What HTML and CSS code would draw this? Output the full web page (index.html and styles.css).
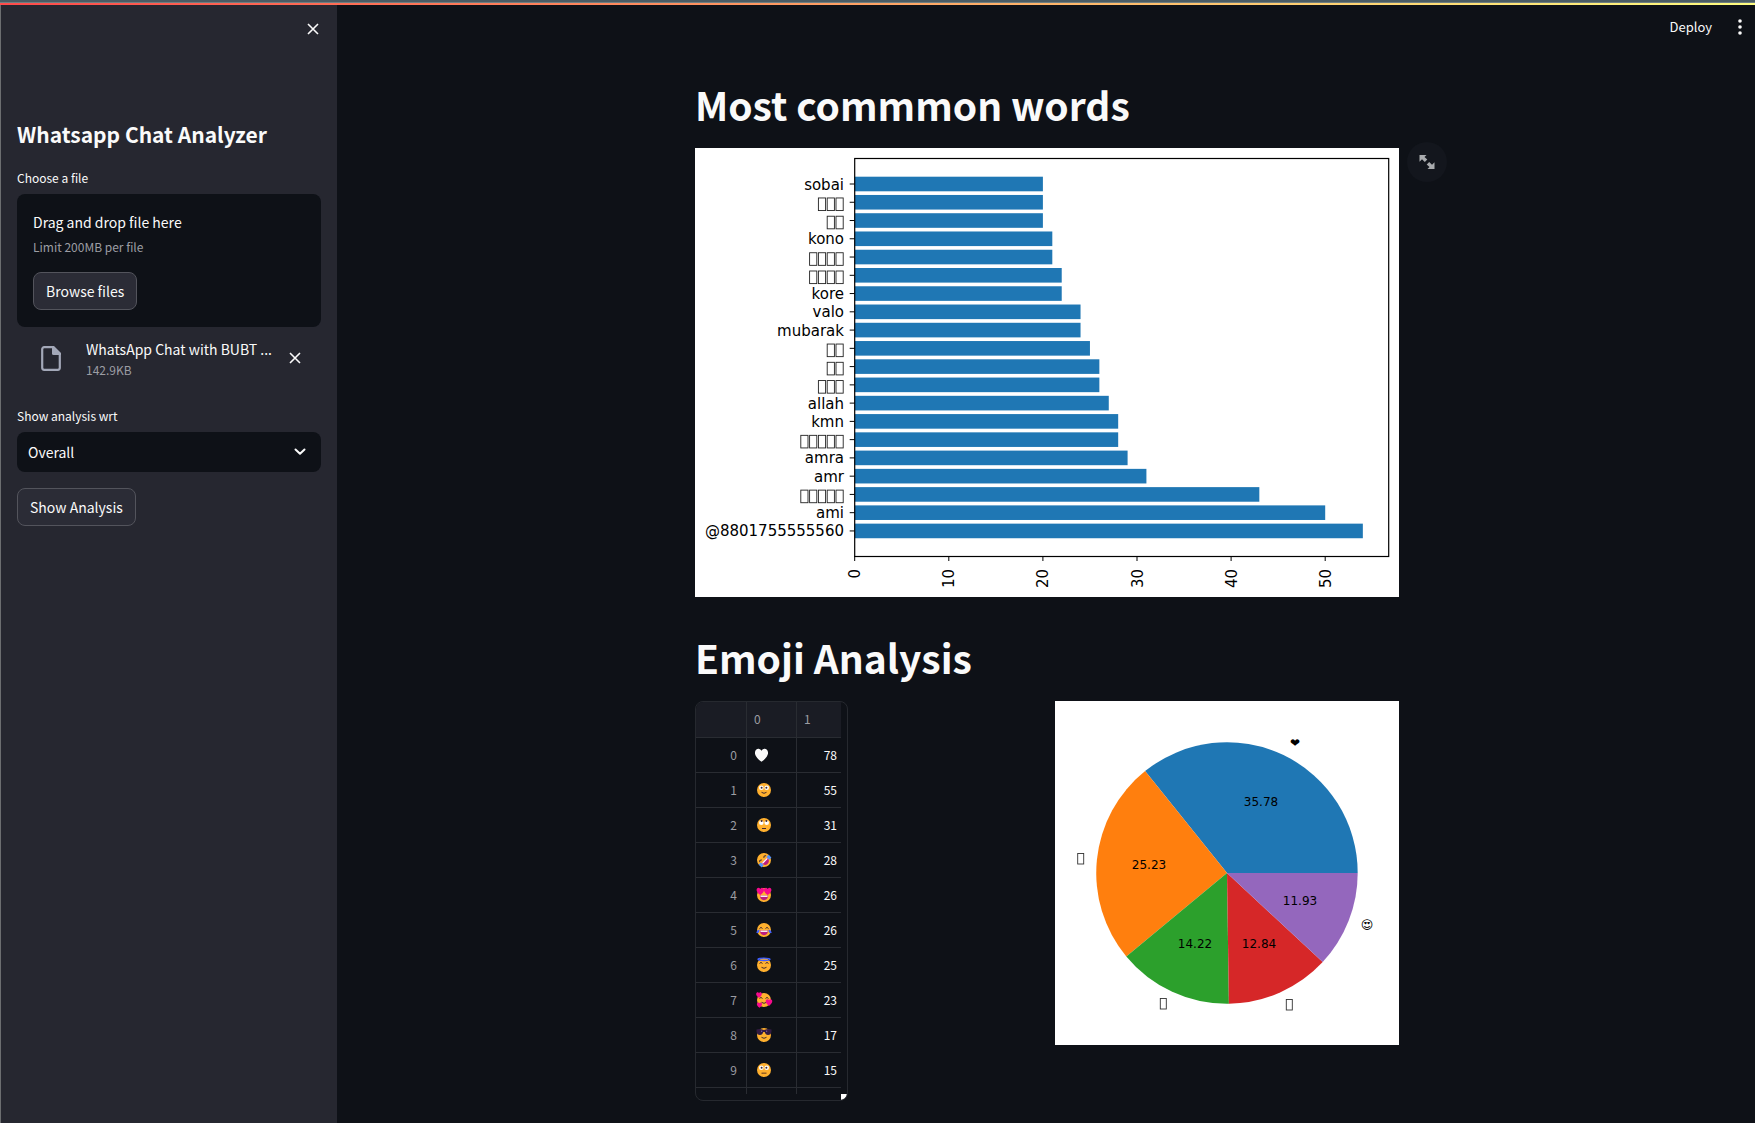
FILE: index.html
```html
<!DOCTYPE html>
<html lang="en">
<head>
<meta charset="utf-8">
<title>Whatsapp Chat Analyzer</title>
<meta name="viewport" content="width=device-width, initial-scale=1">
<link rel="stylesheet" href="styles.css">
</head>
<body>
<div class="window-edge"></div>
<div class="decoration"></div>
<div class="app">
  <aside class="sidebar">
    <div class="sidebar-top">
      <button class="icon-button" type="button" aria-label="Close sidebar">
        <svg width="12" height="12" viewBox="0 0 12 12"><path d="M1 1l10 10M11 1L1 11" stroke="#fafafa" stroke-width="1.6" fill="none"/></svg>
      </button>
    </div>
    <h2 class="sidebar-title">Whatsapp Chat Analyzer</h2>
    <label class="field-label" for="chat-file">Choose a file</label>
    <div class="dropzone">
      <input class="file-input" id="chat-file" type="file" tabindex="-1">
      <span class="drop-text">Drag and drop file here</span>
      <span class="small-text">Limit 200MB per file</span>
      <button class="button browse" type="button">Browse files</button>
    </div>
    <div class="file-row">
      <svg class="file-icon" width="20" height="25" viewBox="0 0 20 25"><path d="M11 1.2H3.2a2 2 0 0 0-2 2v18.6a2 2 0 0 0 2 2h13.6a2 2 0 0 0 2-2V9" fill="none" stroke="#a3a8b8" stroke-width="2.2"/><path d="M11 0h2l7 7v2h-7.5a1.500 1.500 0 0 1-1.500-1.500z" fill="#a3a8b8"/></svg>
      <div class="file-info">
        <span class="file-name">WhatsApp Chat with BUBT ...</span>
        <span class="small-text">142.9KB</span>
      </div>
      <button class="icon-button" type="button" aria-label="Remove file">
        <svg width="12" height="12" viewBox="0 0 12 12"><path d="M1 1l10 10M11 1L1 11" stroke="#fafafa" stroke-width="1.6" fill="none"/></svg>
      </button>
    </div>
    <label class="field-label" for="scope">Show analysis wrt</label>
    <div class="select-box">
      <select id="scope"><option>Overall</option></select>
      <svg class="chevron" width="12" height="8" viewBox="0 0 12 8"><path d="M1.500 1.500L6 5.800l4.500-4.300" fill="none" stroke="#fafafa" stroke-width="2" stroke-linecap="round" stroke-linejoin="round"/></svg>
    </div>
    <button class="button analyze" type="button">Show Analysis</button>
  </aside>

  <main class="main">
    <header class="toolbar">
      <button class="deploy" type="button">Deploy</button>
      <button class="icon-button menu" type="button" aria-label="Menu">
        <svg width="4" height="16" viewBox="0 0 4 16" fill="#fafafa"><circle cx="2" cy="2" r="1.800"/><circle cx="2" cy="8" r="1.800"/><circle cx="2" cy="14" r="1.800"/></svg>
      </button>
    </header>
    <div class="content">
      <h1 class="heading">Most commmon words</h1>
      <figure class="figure">
        <svg class="plot" id="words" viewBox="0 0 704 449" role="img" aria-label="Most common words"></svg>
        <button class="expand" type="button" aria-label="View fullscreen">
          <svg width="16" height="16" viewBox="0 0 16 16" fill="#a9abae"><path d="M.5 1h7L5.500 3l2.800 2.500L5.800 8 3 5.200.5 7.800zM15.500 15h-7l2-2-2.800-2.500L10.200 8l2.800 2.800 2.500-2.600z"/></svg>
        </button>
      </figure>
      <h1 class="heading second">Emoji Analysis</h1>
      <div class="columns">
        <div class="table-frame">
          <table class="table">
            <thead><tr><th class="index"></th><th class="emoji">0</th><th class="count">1</th></tr></thead>
            <tbody id="rows"></tbody>
          </table>
          <span class="resize"></span>
        </div>
        <svg class="pie" viewBox="0 0 344 344" role="img" aria-label="Emoji share">
          <rect width="344" height="344" fill="#fff"/>
          <path fill="#1f77b4" d="M172 172L302.700 172A130.700 130.700 0 0 0 90.100 70.100z"/>
          <path fill="#ff7f0e" d="M172 172L90.100 70.100A130.700 130.700 0 0 0 71.300 255.400z"/>
          <path fill="#2ca02c" d="M172 172L71.300 255.400A130.700 130.700 0 0 0 173.900 302.700z"/>
          <path fill="#d62728" d="M172 172L173.900 302.700A130.700 130.700 0 0 0 267.700 261.100z"/>
          <path fill="#9467bd" d="M172 172L267.700 261.100A130.700 130.700 0 0 0 302.700 172z"/>
          <g class="pie-text">
            <text x="206" y="105">35.78</text><text x="94" y="168">25.23</text><text x="140" y="247">14.22</text><text x="204" y="247">12.84</text><text x="245" y="204">11.93</text>
            <text x="240" y="46">&#x2764;&#xFE0E;</text><text x="312" y="228">&#x1F60D;&#xFE0E;</text>
          </g>
          <g fill="none" stroke="#333" stroke-width=".9"><rect x="22.700" y="152.500" width="6" height="10.500"/><rect x="105.300" y="297.500" width="6" height="10.500"/><rect x="231.300" y="298.500" width="6" height="10.500"/></g>
        </svg>
      </div>
    </div>
  </main>
</div>
<script src="app.js"></script>
</body>
</html>
```
FILE: styles.css
```css
* { box-sizing: border-box; }

body {
  margin: 0;
  min-height: 100vh;
  display: flex;
  flex-direction: column;
  background: #0e1117;
  color: #fafafa;
  font-family: "Noto Sans CJK SC", "Noto Sans", sans-serif;
  font-size: 14px;
  line-height: 22px;
}

button, select { font: inherit; color: inherit; }

button {
  padding: 0;
  border: 0;
  background: none;
}

.window-edge {
  height: 3px;
  background: #4b5c64;
  border-bottom: 1px solid #6f7f82;
}

.decoration {
  height: 2px;
  background: linear-gradient(90deg, #ff4b4b, #fffd80);
}

.app {
  flex: 1;
  display: flex;
  border-left: 1px solid #6c6e70;
}

.sidebar {
  flex: none;
  width: 336px;
  padding: 0 16px;
  background: #262730;
  display: flex;
  flex-direction: column;
}

.sidebar-top {
  display: flex;
  justify-content: flex-end;
  padding: 16px 0 0;
  height: 111px;
}

.icon-button {
  width: 16px;
  height: 16px;
  display: grid;
  place-items: center;
}

.sidebar-title {
  margin: 0 0 17px;
  font-size: 21px;
  line-height: 36px;
  font-weight: 700;
}

.field-label {
  font-size: 12px;
  line-height: 17px;
}

.dropzone {
  position: relative;
  height: 133px;
  margin-top: 8px;
  padding: 16px;
  display: flex;
  flex-direction: column;
  background: #0e1117;
  border-radius: 8px;
}

.file-input {
  position: absolute;
  inset: 0;
  width: 100%;
  opacity: 0;
}

.small-text {
  font-size: 12px;
  line-height: 20px;
  color: #9c9da3;
}

.drop-text {
  margin-bottom: 3px;
  line-height: 24px;
}

.button {
  position: relative;
  height: 38px;
  padding: 0 12px;
  background: #2b2c36;
  border: 1px solid #53545c;
  border-radius: 8px;
  align-self: flex-start;
}

.browse { margin-top: 15px; }

.file-row {
  display: flex;
  align-items: center;
  height: 62px;
  padding: 0 18px 0 24px;
  margin-bottom: 18px;
}

.file-icon { flex: none; }

.file-info {
  flex: 1;
  min-width: 0;
  display: flex;
  flex-direction: column;
  margin: 2px 7px 0 25px;
}

.file-name { white-space: nowrap; }

.select-box {
  position: relative;
  margin: 8px 0 16px;
}

.select-box select {
  display: block;
  width: 100%;
  height: 40px;
  padding: 0 11px;
  appearance: none;
  background: #0e1117;
  border: 0;
  border-radius: 8px;
}

.chevron {
  position: absolute;
  right: 15px;
  top: 16px;
  pointer-events: none;
}

.main {
  flex: 1;
  min-width: 0;
}

.toolbar {
  display: flex;
  justify-content: flex-end;
  align-items: center;
  gap: 20px;
  height: 44px;
  padding-right: 7px;
}

.deploy { font-size: 13px; }

.content {
  width: 706px;
  max-width: 100%;
  margin: 0 auto;
  padding: 28px 0 22px 2px;
}

.heading {
  margin: 0;
  padding-bottom: 17px;
  font-size: 39px;
  line-height: 54px;
  font-weight: 700;
}

.heading.second { padding-top: 33px; }

.figure {
  position: relative;
  margin: 0;
}

.plot {
  display: block;
  width: 100%;
  background: #fff;
}

.plot text {
  font-family: "DejaVu Sans", sans-serif;
  font-size: 15px;
  text-anchor: end;
  fill: #000;
}

.expand {
  position: absolute;
  top: -6px;
  right: -48px;
  width: 40px;
  height: 40px;
  border-radius: 50%;
  background: #13161d;
  display: grid;
  place-items: center;
}

.columns {
  display: flex;
  justify-content: space-between;
  align-items: flex-start;
}

.table-frame {
  position: relative;
  width: 153px;
  height: 400px;
  padding: 0 6px 6px 0;
  border: 1px solid #26292f;
  border-radius: 8px;
  overflow: hidden;
}

.table {
  display: block;
  height: 392px;
  overflow: hidden;
  border-spacing: 0;
  font-size: 12px;
  line-height: 34px;
}

.table thead, .table tbody { display: block; }

.table tr {
  display: grid;
  grid-template-columns: 51px 50px 1fr;
  height: 35px;
}

.table th {
  height: 36px;
  font-weight: 400;
  text-align: left;
  background: #1a1c24;
  color: #9c9da3;
}

.table thead tr { height: 36px; }

.table th, .table td {
  padding: 0 7px;
  border-right: 1px solid #292c32;
  border-bottom: 1px solid #292c32;
}

.table td { height: 35px; }

.table .index { padding-right: 9px; text-align: right; color: #9c9da3; }

.table .count { border-right: 0; }

.table td.count { padding-right: 4px; text-align: right; }

.table td svg { display: block; margin: 9px 2px; overflow: visible; }

.resize {
  position: absolute;
  right: 0;
  bottom: 0;
  width: 6px;
  height: 6px;
  background: #fff;
  border-bottom-right-radius: 6px;
}

.pie {
  width: 344px;
  flex: none;
}

.pie-text {
  font-family: "DejaVu Sans", sans-serif;
  font-size: 12px;
  text-anchor: middle;
}
```
FILE: app.js
```js
// Numbers stand for words whose script the plot font lacks: that many empty boxes.
const words = [
  ["sobai", 20], [3, 20], [2, 20], ["kono", 21], [4, 21], [4, 22], ["kore", 22],
  ["valo", 24], ["mubarak", 24], [2, 25], [2, 26], [3, 26], ["allah", 27],
  ["kmn", 28], [5, 28], ["amra", 29], ["amr", 31], [5, 43], ["ami", 50],
  ["@8801755555560", 54]
];
const x0 = 159.7, unit = 9.41, first = 36, pitch = 18.26;
let plot = "";
words.forEach(([label, value], i) => {
  const y = first + i * pitch;
  plot += `<rect x="${x0}" y="${y - 7.3}" width="${value * unit}" height="14.6" fill="#1f77b4"/>`;
  plot += `<path d="M${x0 - 5} ${y}h5" stroke="#000"/>`;
  if (typeof label === "string") {
    plot += `<text x="149" y="${y + 5.5}">${label}</text>`;
  } else {
    for (let k = 0; k < label; k++) {
      plot += `<rect x="${141 - k * 8.8}" y="${y - 4.3}" width="7.2" height="12.6" fill="none" stroke="#222" stroke-width=".9"/>`;
    }
  }
});
for (let v = 0; v <= 50; v += 10) {
  const x = x0 + v * unit;
  plot += `<path d="M${x} 408v5" stroke="#000"/>`;
  plot += `<text transform="translate(${x + 5.5} 421) rotate(-90)">${v}</text>`;
}
plot += `<rect x="159.700" y="10.500" width="534" height="398" fill="none" stroke="#000" stroke-width="1.2"/>`;
document.getElementById("words").innerHTML = plot;

const face = '<circle cx="8" cy="8" r="7" fill="#ffb02e"/>';
const dark = 'fill="none" stroke="#402a32" stroke-width="1"';
const heart = (x, y, s, c) => `<path transform="translate(${x} ${y}) scale(${s})" fill="${c}" d="M0 4.500C-7-.500-4-4.500-1.800-4.200Q-.5-4 0-2.800Q.5-4 1.800-4.200C4-4.500 7-.500 0 4.500z"/>`;
const smile = `<path d="M5.500 10.300q2.500 2 5 0" ${dark}/>`;
const closed = `<path d="M3.500 6.500q1.500-2.200 3 0M9.500 6.500q1.500-2.200 3 0" ${dark}/>`;
const mouth = '<path d="M3.800 8.600h8.400q-.6 4.600-4.200 4.600T3.800 8.600z" fill="#bb1d80"/><path d="M4.500 8.600h7v1.300h-7z" fill="#fff"/>';
const eyes = dy => `<circle cx="5.300" cy="5.800" r="2.300" fill="#fff"/><circle cx="10.700" cy="5.800" r="2.300" fill="#fff"/><circle cx="5.600" cy="${5.8 + dy}" r="1" fill="#402a32"/><circle cx="10.400" cy="${5.8 + dy}" r="1" fill="#402a32"/>`;
const emojis = [
  [heart(5.5, 8, 1.5, "#fafafa"), 78],
  [face + eyes(0) + smile, 55],
  [face + eyes(-1.7) + `<path d="M6 11.500h4" ${dark}/>`, 31],
  [`<g transform="rotate(-45 8 8)">${face}${closed}${mouth}<path d="M1 7.500h3v4H1zM12 7.500h3v4h-3z" fill="#5092ff"/></g>`, 28],
  [face + mouth + heart(4.3, 4.3, .85, "#f70a8d") + heart(11.7, 4.3, .85, "#f70a8d"), 26],
  [face + closed + mouth + '<path d="M.5 10q.500-2.500 3-2.500 0 3.500-1.800 3.500T.5 10zM15.500 10q-.5-2.500-3-2.500 0 3.500 1.800 3.500T15.500 10z" fill="#3f5fff"/>', 26],
  [face + closed + smile + '<ellipse cx="8" cy="2.300" rx="6" ry="1.200" fill="none" stroke="#3f5fff" stroke-width="1.400"/>', 25],
  [face + closed + smile + heart(3, 3, .65, "#f70a8d") + heart(13, 10.5, .75, "#f70a8d") + heart(3.5, 13, .6, "#f70a8d"), 23],
  [face + smile + '<path d="M.5 2.500q3-1 7.500.500 4.500-1.500 7.500-.500v2q-.5 3.500-3.500 3.500-2.500 0-3.300-3H7.300q-.8 3-3.300 3-3 0-3.500-3.500z" fill="#321b41"/><path d="M5 4.200h1.200M10 4.200h1.200" stroke="#8d65c5"/>', 17],
  [face + eyes(0) + '<path d="M5.500 10.500h5v1.400h-5z" fill="#8f5b24"/>', 15],
  ["", ""]
];
document.getElementById("rows").innerHTML = emojis.map(([art, count], i) =>
  `<tr><td class="index">${i < 10 ? i : ""}</td><td class="emoji"><svg width="16" height="16" viewBox="0 0 16 16">${art}</svg></td><td class="count">${count}</td></tr>`).join("");
```
